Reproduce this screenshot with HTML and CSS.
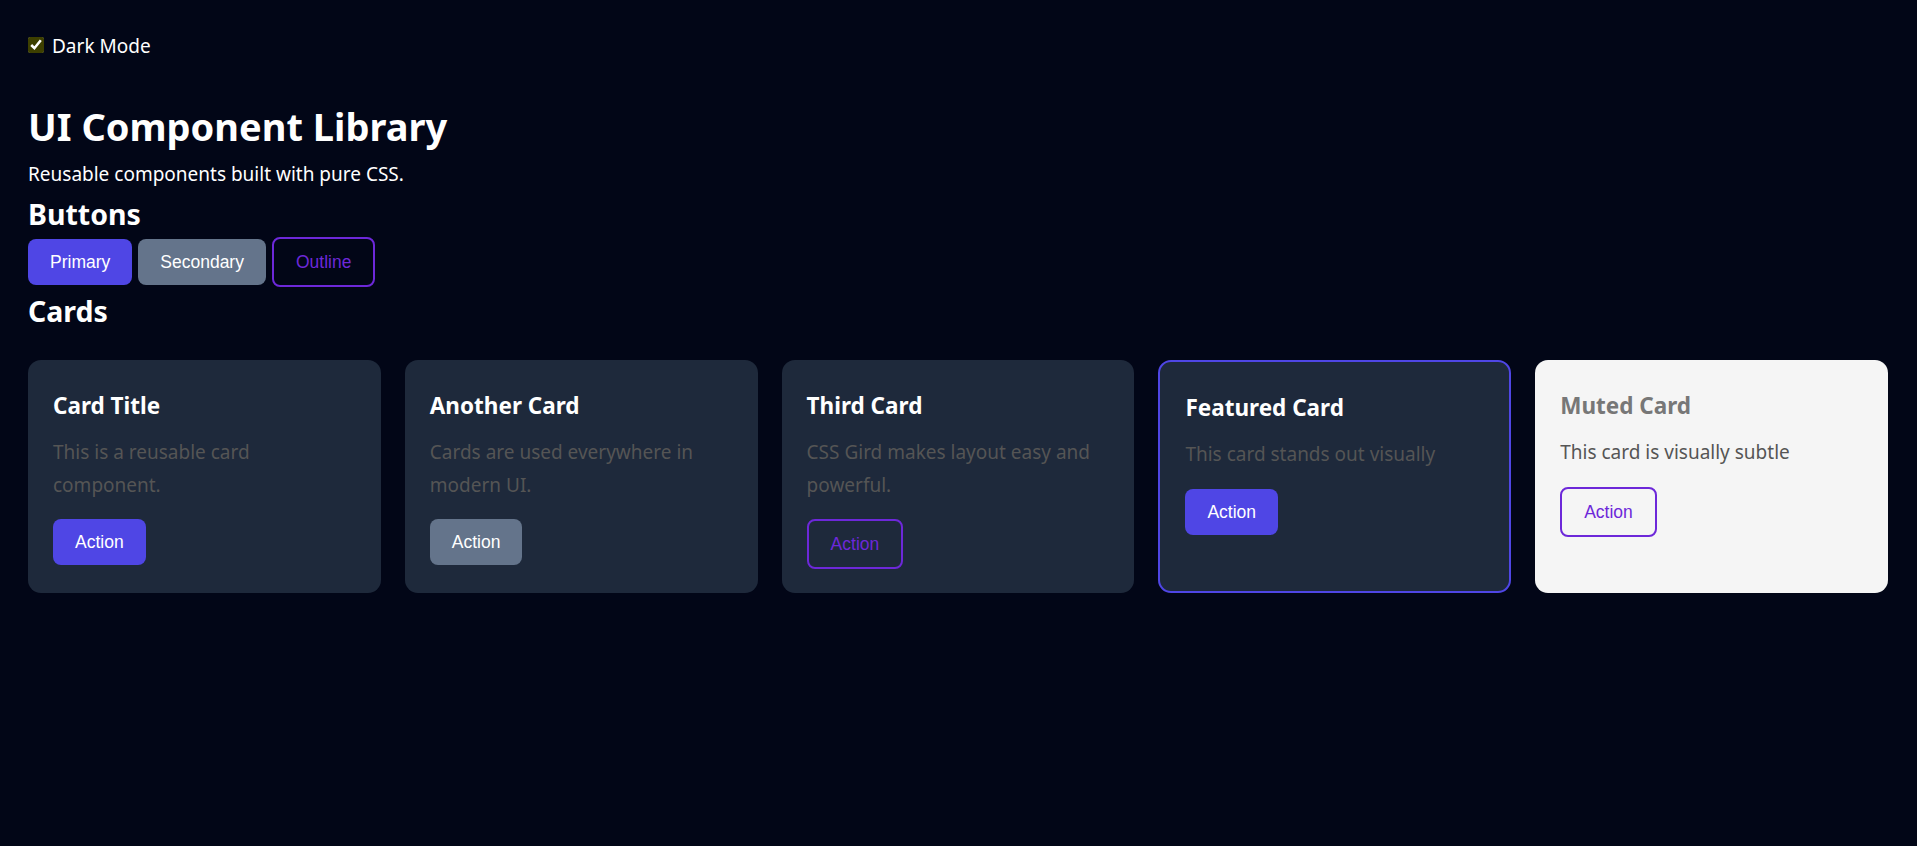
FILE: index.html
```html
<!DOCTYPE html>
<html lang="en">
<head>
<meta charset="utf-8">
<title>UI Component Library</title>
<link rel="stylesheet" href="styles.css">
</head>
<body>
  <label class="toggle">
    <input type="checkbox" class="toggle-box" checked>
    <span>Dark Mode</span>
  </label>

  <h1 class="page-title">UI Component Library</h1>
  <p class="page-subtitle">Reusable components built with pure CSS.</p>

  <h2 class="section-title">Buttons</h2>
  <div class="button-row">
    <button class="btn btn-primary">Primary</button>
    <button class="btn btn-secondary">Secondary</button>
    <button class="btn btn-outline">Outline</button>
  </div>

  <h2 class="section-title">Cards</h2>
  <div class="card-grid">
    <div class="card">
      <h3 class="card-title">Card Title</h3>
      <p class="card-text">This is a reusable card component.</p>
      <button class="btn btn-primary">Action</button>
    </div>
    <div class="card">
      <h3 class="card-title">Another Card</h3>
      <p class="card-text">Cards are used everywhere in modern UI.</p>
      <button class="btn btn-secondary">Action</button>
    </div>
    <div class="card">
      <h3 class="card-title">Third Card</h3>
      <p class="card-text">CSS Gird makes layout easy and powerful.</p>
      <button class="btn btn-outline">Action</button>
    </div>
    <div class="card card-featured">
      <h3 class="card-title">Featured Card</h3>
      <p class="card-text">This card stands out visually</p>
      <button class="btn btn-primary">Action</button>
    </div>
    <div class="card card-muted">
      <h3 class="card-title">Muted Card</h3>
      <p class="card-text">This card is visually subtle</p>
      <button class="btn btn-outline">Action</button>
    </div>
  </div>
</body>
</html>
```

FILE: styles.css
```css
* {
  box-sizing: border-box;
}

html, body {
  height: 100%;
}

body {
  margin: 0;
  padding: 34px 29px 0 28px;
  background: #020617;
  color: #ffffff;
  font-family: "Noto Sans", "Open Sans", sans-serif;
  font-size: 19px;
}

.toggle {
  display: flex;
  align-items: center;
  gap: 8px;
  height: 24px;
  line-height: 24px;
}

.toggle-box {
  width: 16px;
  height: 16px;
  margin: -2px 0 0 0;
  accent-color: #3d3f00;
}

.page-title {
  margin: 44px 0 0;
  font-size: 38px;
  line-height: 48px;
  font-weight: 700;
}

.page-subtitle {
  margin: 10px 0 0;
  font-size: 19px;
  line-height: 28px;
}

.section-title {
  margin: 8px 0 0;
  font-size: 28.5px;
  line-height: 36px;
  font-weight: 700;
}

.button-row + .section-title {
  margin-top: 6px;
}

.button-row {
  display: flex;
  align-items: center;
  gap: 6px;
  margin-top: 5px;
}

.btn {
  font-family: "Liberation Sans", Arial, sans-serif;
  font-size: 17.5px;
  line-height: 20px;
  padding: 13px 22px;
  border: none;
  border-radius: 8px;
  color: #ffffff;
  cursor: pointer;
}

.btn-primary {
  background: #4f46e5;
}

.btn-secondary {
  background: #64748b;
}

.btn-outline {
  background: transparent;
  border: 2px solid #6d28d9;
  color: #6d28d9;
}

.card-grid {
  display: grid;
  grid-template-columns: repeat(5, 1fr);
  gap: 24px;
  margin-top: 31px;
}

.card {
  display: flex;
  flex-direction: column;
  align-items: flex-start;
  background: #1e293b;
  border-radius: 13px;
  padding: 31px 25px 24px;
}

.card-featured {
  border: 2px solid #4f46e5;
}

.card-title {
  margin: 0;
  font-size: 22.5px;
  line-height: 30px;
  font-weight: 700;
  color: #ffffff;
}

.card-text {
  margin: 15px 0 18px;
  font-size: 19px;
  line-height: 32.5px;
  color: #555555;
}

.card-muted {
  background: #f5f5f5;
}

.card-muted .card-title {
  color: #777777;
}

.card-muted .card-text {
  color: #555555;
}
```
